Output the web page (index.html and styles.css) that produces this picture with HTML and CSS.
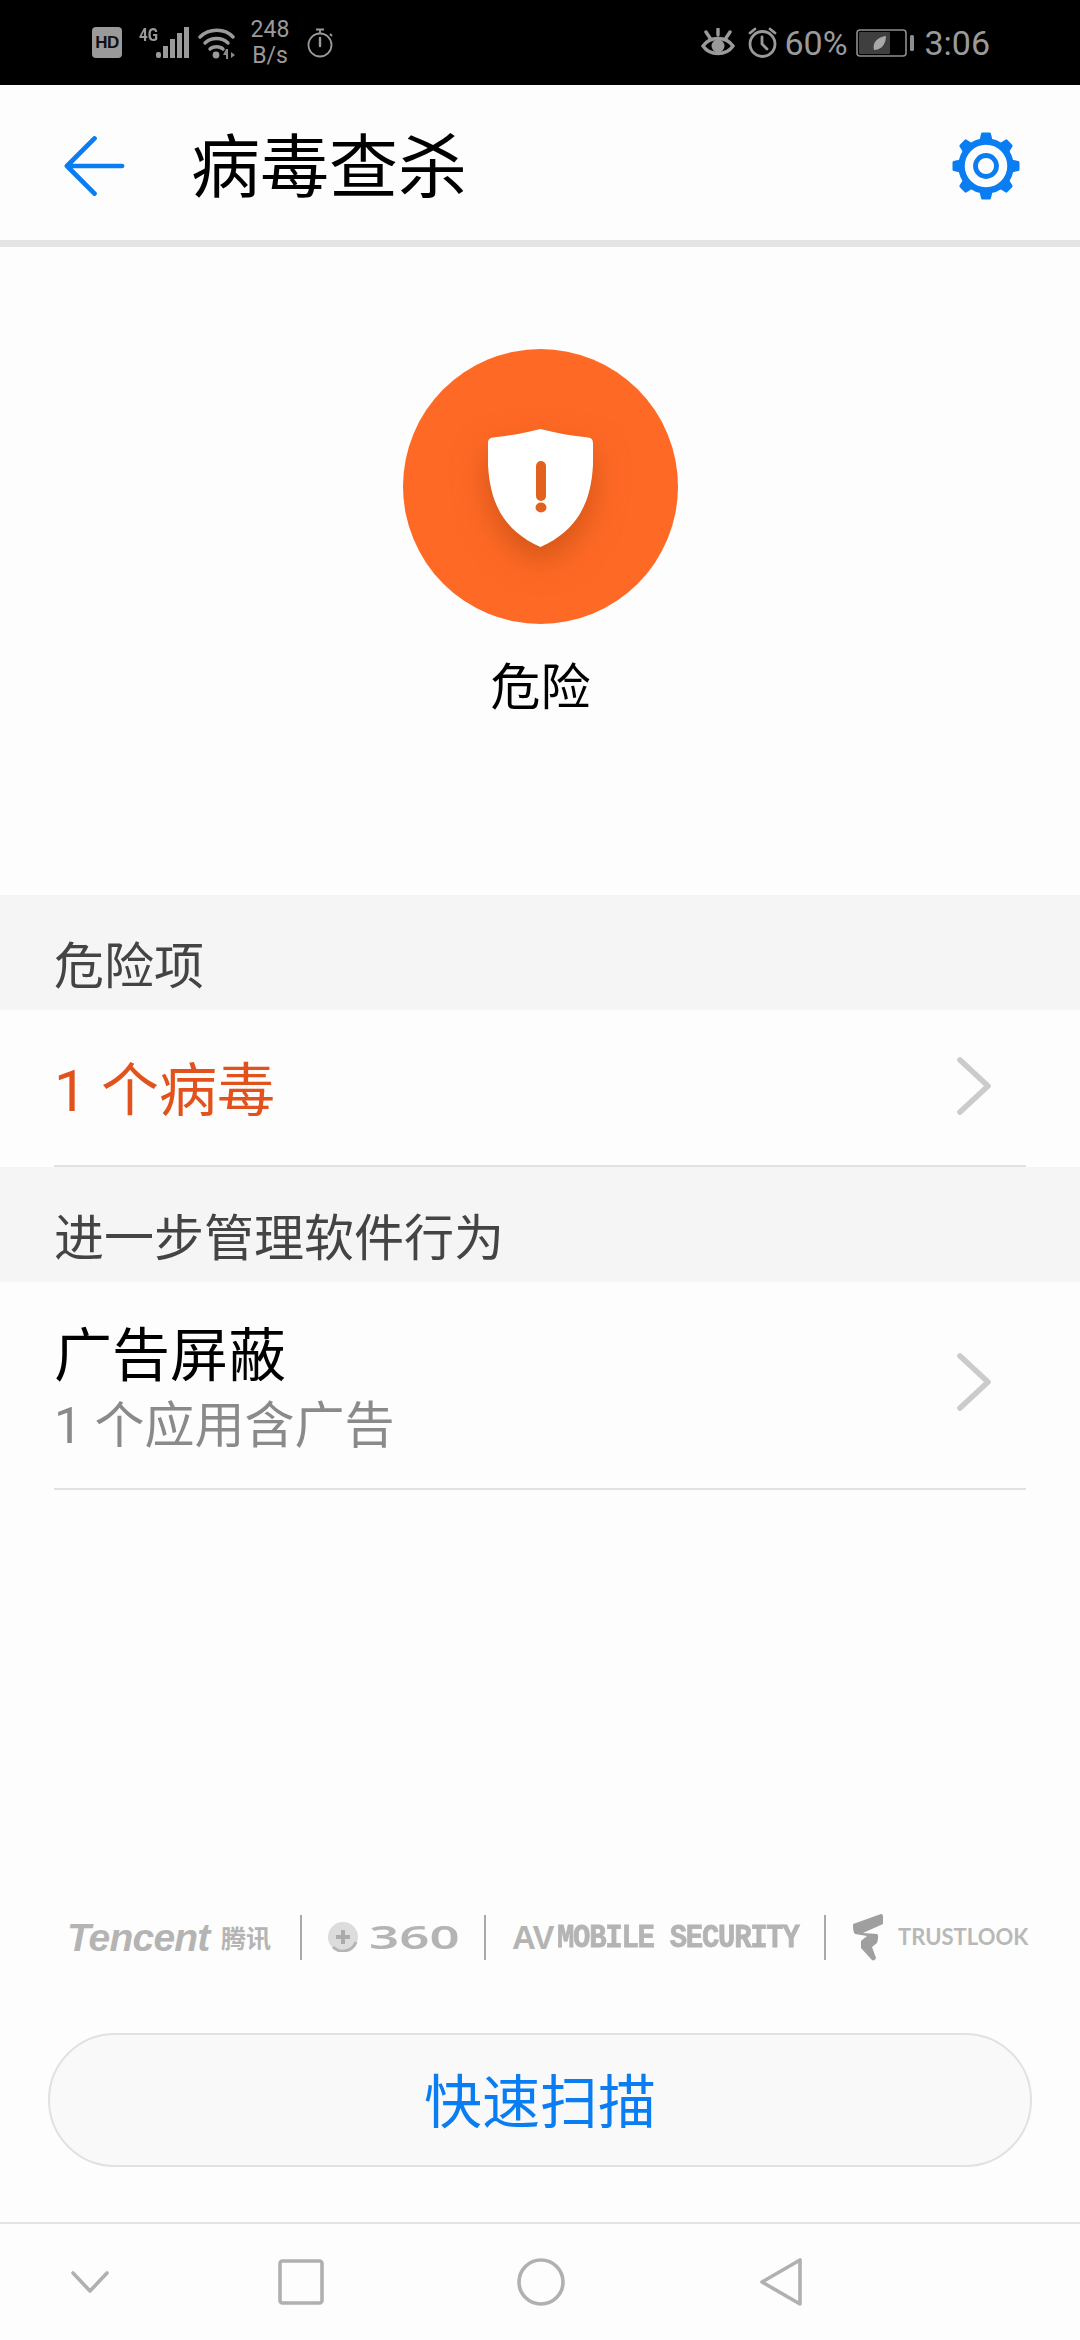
FILE: index.html
```html
<!DOCTYPE html>
<html lang="zh-CN">
<head>
<meta charset="utf-8">
<title>病毒查杀</title>
<link rel="stylesheet" href="styles.css">
</head>
<body>
<div class="page">
  <header class="status">
    <div class="status-left">
      <span class="hd">HD</span>
      <span class="net">4G</span>
      <svg class="bars" width="33" height="31" viewBox="0 0 33 31"><g fill="#9a9a9a"><rect x="0" y="25" width="5" height="6" rx="2"/><rect x="7" y="19" width="5" height="12"/><rect x="14" y="12" width="5" height="19"/><rect x="21" y="6" width="5" height="25"/><rect x="28" y="0" width="5" height="31"/></g></svg>
      <svg class="wifi" width="37" height="32" viewBox="0 0 37 32"><g fill="none" stroke="#9a9a9a" stroke-width="3.4" stroke-linecap="round"><path d="M2 10C11 1 27 1 35 10"/><path d="M7 16C13 10 24 10 30 16"/><path d="M12 22C15 19 22 19 25 22"/></g><circle cx="18" cy="28" r="3.4" fill="#9a9a9a"/><path d="M28 22l-3 6h3v4h2v-10zM33 25l4 3-4 3z" fill="#8a8a8a"/></svg>
      <span class="speed"><span>248</span><span>B/s</span></span>
      <svg class="timer" width="26" height="30" viewBox="0 0 26 30"><g fill="none" stroke="#9a9a9a" stroke-width="1.8"><circle cx="13" cy="17" r="11.5"/><path d="M9 1.5h8M13 2v3M23 6l2 2"/></g><path d="M13 10v8" stroke="#9a9a9a" stroke-width="2.4" stroke-linecap="round"/></svg>
    </div>
    <div class="status-right">
      <svg class="eye" width="34" height="30" viewBox="0 0 34 30"><g fill="none" stroke="#9a9a9a" stroke-width="3.400" stroke-linecap="round"><path d="M2 18C9 8 25 8 32 18C25 28 9 28 2 18Z"/><path d="M5 4l4 6M17 1v6M29 4l-4 6"/></g><circle cx="17" cy="18" r="6.500" fill="#9a9a9a"/></svg>
      <svg class="alarm" width="31" height="31" viewBox="0 0 31 31"><g fill="none" stroke="#9a9a9a" stroke-width="2.8" stroke-linecap="round"><circle cx="15.500" cy="17" r="12.500"/><path d="M3 6l5-4M28 6l-5-4M15 10v7l5 5"/></g></svg>
      <span class="pct">60%</span>
      <svg class="battery" width="58" height="28" viewBox="0 0 58 28"><rect x="1" y="1" width="49" height="26" rx="3" fill="none" stroke="#8e8e8e" stroke-width="1.600"/><rect x="3" y="3" width="31" height="22" rx="1" fill="#3f3f3f"/><path d="M18 21C16 13 22 8 30 7C30 14 26 21 18 21Z" fill="#a8a8a8"/><rect x="54" y="6" width="4" height="16" rx="1.500" fill="#8e8e8e"/></svg>
      <span class="clock">3:06</span>
    </div>
  </header>

  <nav class="appbar">
    <svg class="back" width="62" height="62" viewBox="0 0 62 62"><path d="M31 3L3 31L31 59M3 31H59" fill="none" stroke="#0a7df2" stroke-width="4.800" stroke-linecap="round" stroke-linejoin="round"/></svg>
    <h1 class="title">病毒查杀</h1>
    <svg class="gear" width="68" height="68" viewBox="0 0 68 68">
      <defs><path id="tooth" d="M30.500 2h7l2.500 11h-12z" fill="#0a7df2" stroke="#0a7df2" stroke-width="3" stroke-linejoin="round"/></defs>
      <use href="#tooth"/>
      <use href="#tooth" transform="rotate(45 34 34)"/>
      <use href="#tooth" transform="rotate(90 34 34)"/>
      <use href="#tooth" transform="rotate(135 34 34)"/>
      <use href="#tooth" transform="rotate(180 34 34)"/>
      <use href="#tooth" transform="rotate(225 34 34)"/>
      <use href="#tooth" transform="rotate(270 34 34)"/>
      <use href="#tooth" transform="rotate(315 34 34)"/>
      <circle cx="34" cy="34" r="24.500" fill="#fdfdfd" stroke="#0a7df2" stroke-width="6.500"/>
      <circle cx="34" cy="34" r="10.500" fill="none" stroke="#0a7df2" stroke-width="4.800"/>
    </svg>
  </nav>

  <section class="hero">
    <div class="badge">
      <svg class="shield" width="105" height="118" viewBox="0 0 105 118">
        <path d="M52.500 0C68 4 84 7 100 8.500C104 9 105 11 105 15C107 62 97 98 52.500 118C8 98 -2 62 0 15C0 11 1 9 5 8.500C21 7 37 4 52.500 0Z" fill="#fff"/>
        <rect x="48" y="32" width="10" height="40" rx="5" fill="#e2611f"/>
        <ellipse cx="53" cy="78.500" rx="5.500" ry="5" fill="#e2611f"/>
      </svg>
    </div>
    <div class="verdict">危险</div>
  </section>

  <div class="section-head">危险项</div>
  <div class="row row-single">
    <span class="row-danger">1 个病毒</span>
    <svg class="chev" width="34" height="58" viewBox="0 0 34 58"><path d="M3 3L31 29L3 55" fill="none" stroke="#cbcbcb" stroke-width="5.600" stroke-linecap="round" stroke-linejoin="round"/></svg>
  </div>
  <div class="section-head">进一步管理软件行为</div>
  <div class="row row-double">
    <div class="row-text">
      <span class="row-title">广告屏蔽</span>
      <span class="row-sub">1 个应用含广告</span>
    </div>
    <svg class="chev" width="34" height="58" viewBox="0 0 34 58"><path d="M3 3L31 29L3 55" fill="none" stroke="#cbcbcb" stroke-width="5.600" stroke-linecap="round" stroke-linejoin="round"/></svg>
  </div>

  <div class="spacer"></div>

  <div class="logos">
    <span class="logo-tencent">Tencent</span>
    <span class="logo-tencent-cn">腾讯</span>
    <i class="sep sep-a"></i>
    <svg class="logo-360-icon" width="30" height="30" viewBox="0 0 30 30"><circle cx="15" cy="15" r="15" fill="#dcdcdc"/><path d="M5 25A14 14 0 0 0 28 20" fill="none" stroke="#b5b5b5" stroke-width="3"/><path d="M15 8v14M8 15h14" stroke="#ababab" stroke-width="4"/></svg>
    <span class="logo-360">360</span>
    <i class="sep sep-b"></i>
    <span class="logo-av">AV</span>
    <span class="logo-mobile">MOBILE SECURITY</span>
    <i class="sep sep-c"></i>
    <svg class="logo-trust-icon" width="30" height="47" viewBox="0 0 30 47"><path d="M0 10L28 0C30 0 30 2 30 4V10L10 19L24 20C26 21 25 26 24 29L19 33L23 44C22 47 19 47 18 45L8 34V27L14 22L2 20C0 18 0 14 0 10Z" fill="#9f9f9f"/></svg>
    <span class="logo-trust">TRUSTLOOK</span>
  </div>

  <div class="action">
    <button class="scan">快速扫描</button>
  </div>

  <footer class="navbar">
    <svg class="nav-down" width="38" height="22" viewBox="0 0 38 22"><path d="M2 2L19 20L36 2" fill="none" stroke="#b0b0b0" stroke-width="3.600" stroke-linecap="round" stroke-linejoin="round"/></svg>
    <svg class="nav-square" width="46" height="46" viewBox="0 0 46 46"><rect x="2" y="2" width="42" height="42" rx="2.500" fill="none" stroke="#b0b0b0" stroke-width="3.600"/></svg>
    <svg class="nav-circle" width="48" height="48" viewBox="0 0 48 48"><circle cx="24" cy="24" r="22" fill="none" stroke="#b0b0b0" stroke-width="3.600"/></svg>
    <svg class="nav-back" width="42" height="48" viewBox="0 0 42 48"><path d="M40 2V46L2 24Z" fill="none" stroke="#b0b0b0" stroke-width="3.600" stroke-linejoin="round"/></svg>
  </footer>
</div>
</body>
</html>
```
FILE: styles.css
```css
* { box-sizing: border-box; }
html, body { margin: 0; padding: 0; }
body { font-family: "Roboto", "Noto Sans CJK SC", sans-serif; background: #fdfdfd; }
.page { width: 1080px; height: 2340px; display: flex; flex-direction: column; overflow: hidden; background: #fdfdfd; }

.status { height: 85px; background: #000; color: #9a9a9a; display: flex; justify-content: space-between; align-items: center; flex: none; }
.status-left { display: flex; align-items: center; padding-left: 92px; height: 85px; }
.status-right { display: flex; align-items: center; padding-right: 90px; height: 85px; }
.hd { width: 30px; height: 31px; background: #9a9a9a; color: #111; border-radius: 4px; font: 700 17px/31px "Liberation Sans", sans-serif; text-align: center; letter-spacing: -0.500px; }
.net { font: 700 19px/15px "Roboto", sans-serif; width: 17px; margin-left: 17px; margin-bottom: 17px; transform: scaleX(.8); transform-origin: left; }
.wifi { margin-left: 9px; }
.speed { display: flex; flex-direction: column; align-items: center; width: 42px; margin-left: 14px; font-size: 23px; line-height: 26px; }
.timer { margin-left: 16px; }
.alarm { margin-left: 12px; }
.pct { font-size: 34px; margin-left: 6px; width: 64px; }
.battery { margin-left: 8px; }
.clock { font-size: 34px; margin-left: 10px; }

.appbar { height: 155px; flex: none; display: flex; align-items: center; padding: 7px 0 0 64px; }
.back { flex: none; width: 61px; height: 62px; }
.title { margin: 6px 0 0 66px; font-size: 69px; font-weight: 400; line-height: 80px; color: #000; }
.gear { margin-left: auto; margin-right: 60px; }

.hero { height: 655px; flex: none; border-top: 7px solid #e4e4e4; display: flex; flex-direction: column; align-items: center; padding-top: 102px; }
.badge { width: 275px; height: 275px; border-radius: 50%; background: #ff6926; display: flex; align-items: center; justify-content: center; }
.shield { margin-top: 3px; filter: drop-shadow(0 14px 16px rgba(170, 70, 10, .55)); }
.verdict { font-size: 50px; line-height: 60px; margin-top: 34px; color: #000; padding-left: 1px; }

.section-head { height: 115px; flex: none; background: #f5f5f5; padding: 0 54px 8px; font-size: 50px; color: #444; display: flex; align-items: flex-end; line-height: 70px; }

.row { padding: 0 89px 0 54px; flex: none; display: flex; align-items: center; justify-content: space-between; position: relative; }
.row::after { content: ""; position: absolute; left: 54px; right: 54px; bottom: 0; height: 2px; background: #e2e2e2; }
.row-single { height: 157px; }
.row-double { height: 208px; }
.row-single .chev { margin-top: -6px; }
.row-double .chev { margin-top: -8px; }
.row-danger { font-size: 58px; line-height: 70px; color: #e2521c; margin-top: 4px; }
.row-text { display: flex; flex-direction: column; margin-top: 10px; }
.row-title { font-size: 58px; line-height: 70px; color: #000; }
.row-sub { font-size: 50px; line-height: 70px; color: #8a8a8a; }
.chev { flex: none; }

.spacer { flex: 1; }

.logos { flex: none; height: 50px; display: flex; align-items: center; padding-left: 67px; color: #b4b4b4; margin-bottom: 71px; white-space: nowrap; }
.sep { display: block; width: 2px; height: 45px; background: #aaa; flex: none; }
.logo-tencent { font: italic 700 39px/1 "Liberation Sans", sans-serif; width: 154px; letter-spacing: -0.800px; }
.logo-tencent-cn { font-size: 25px; font-weight: 700; width: 79px; }
.logo-360-icon { margin-left: 26px; }
.logo-360 { font: 600 32px/1 "Noto Sans", sans-serif; width: 88px; margin-left: 11px; transform: scaleX(1.650); transform-origin: left; }
.sep-b { margin-left: 27px; }
.logo-av { font: 700 33px/1 "Liberation Sans", sans-serif; margin-left: 26px; width: 45px; letter-spacing: -1px; }
.logo-mobile { font: 700 29px/1 "Liberation Mono", monospace; width: 239px; letter-spacing: -1.300px; padding-top: 3px; transform: scaleY(1.150); -webkit-text-stroke: 0.700px #b4b4b4; }
.sep-c { margin-left: 28px; }
.logo-trust-icon { margin-left: 27px; }
.logo-trust { font: 700 22px/1 "Lato", sans-serif; margin-left: 15px; letter-spacing: 0; color: #b8b8b8; }

.action { flex: none; padding: 0 48px; margin-bottom: 55px; }
.scan { display: block; width: 100%; height: 134px; border-radius: 67px; background: #f9f9f9; border: 2px solid #e1e1e1; color: #0a7df2; font: 400 58px/1 "Roboto", "Noto Sans CJK SC", sans-serif; padding: 6px 0 0; }

.navbar { flex: none; height: 118px; border-top: 2px solid #e4e4e4; display: flex; align-items: center; }
.nav-down { margin-left: 71px; }
.nav-square { margin-left: 169px; }
.nav-circle { margin-left: 193px; }
.nav-back { margin-left: 195px; }
```
